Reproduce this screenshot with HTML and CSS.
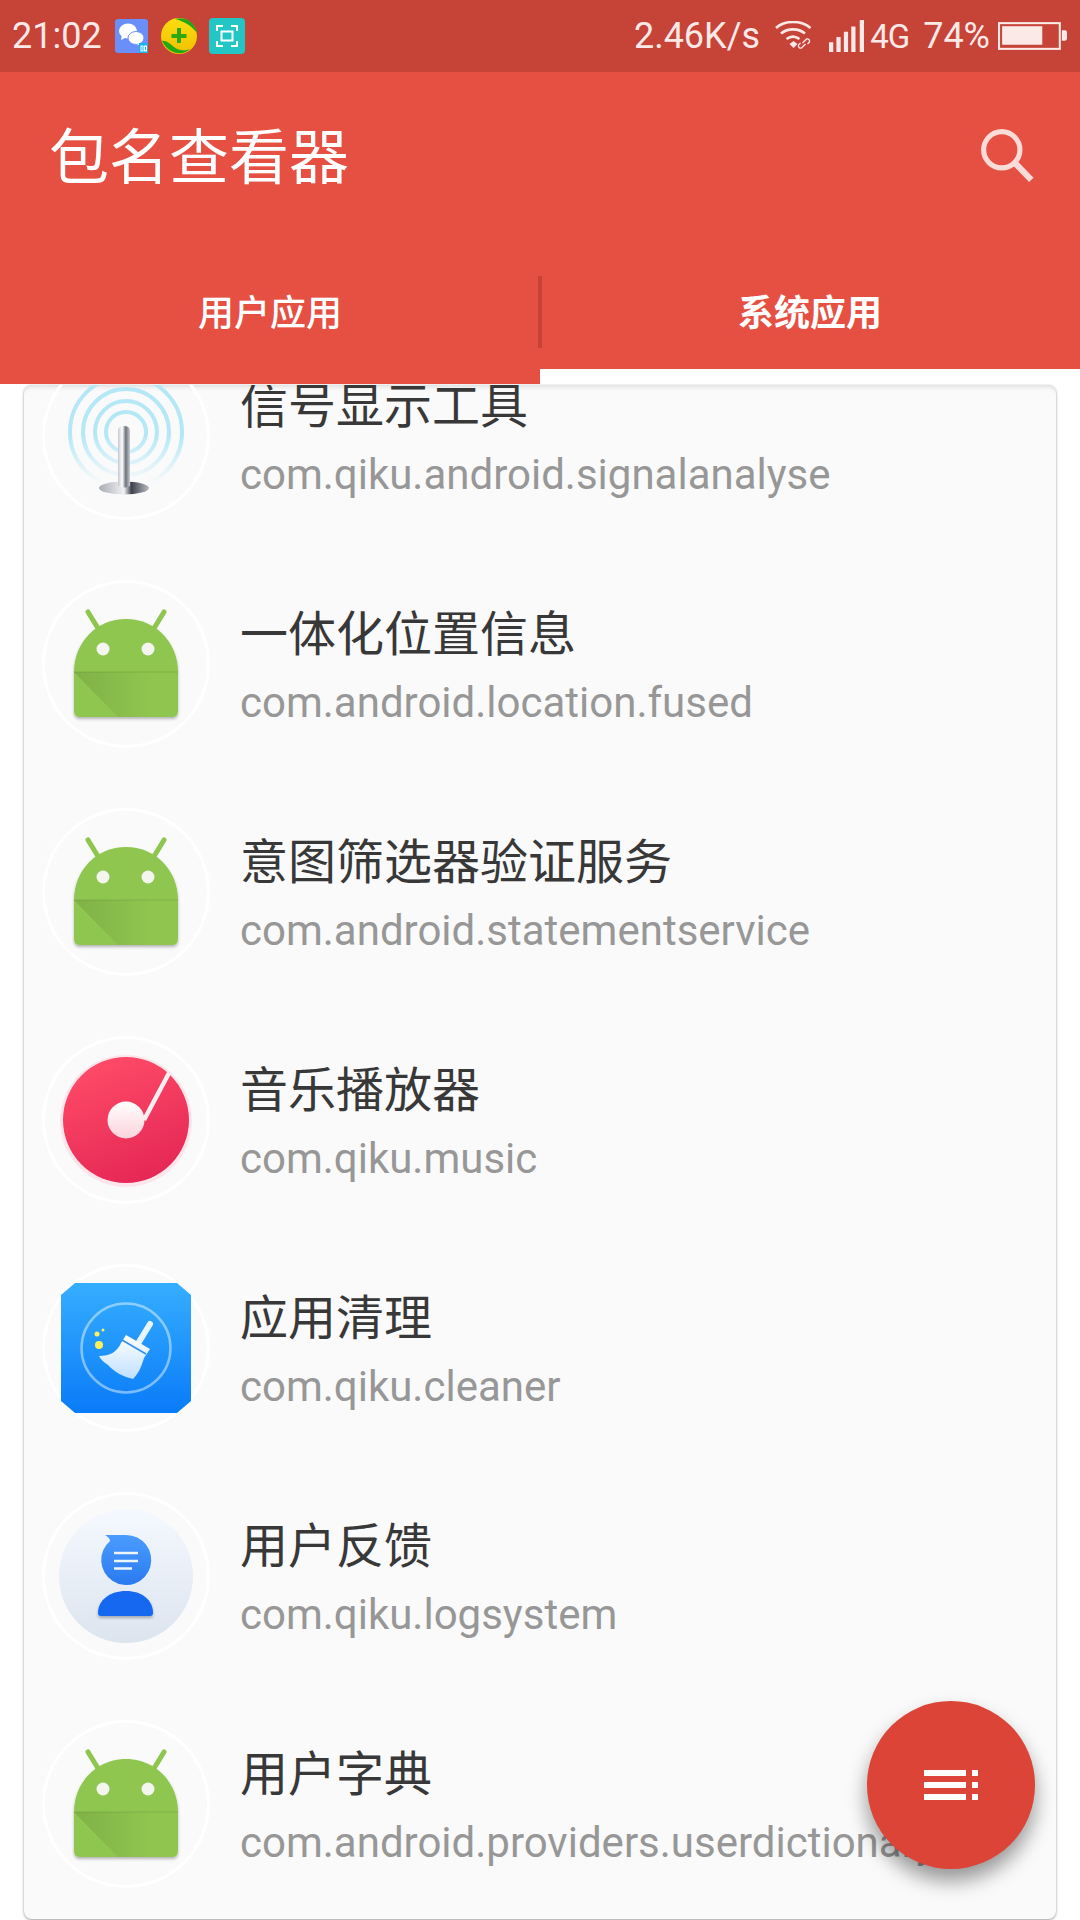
FILE: index.html
```html
<!DOCTYPE html>
<html lang="zh-CN">
<head>
  <meta charset="UTF-8" />
  <meta name="viewport" content="width=device-width, initial-scale=1.0" />
  <title>包名查看器</title>
  <link rel="stylesheet" href="styles.css">
</head>
<body>

<!-- shared icon parts -->
<svg class="defs" aria-hidden="true">
  <defs>
    <linearGradient id="foldShade" x1="0" y1="0" x2="1" y2="0">
      <stop offset="0" stop-color="#000" stop-opacity=".11"/>
      <stop offset=".75" stop-color="#000" stop-opacity="0"/>
    </linearGradient>
    <linearGradient id="musicFill" x1="0.3" y1="0" x2="0.7" y2="1">
      <stop offset="0" stop-color="#ff4b68"/>
      <stop offset="1" stop-color="#e42654"/>
    </linearGradient>
    <linearGradient id="musicDot" x1="0" y1="0" x2="0" y2="1">
      <stop offset="0" stop-color="#fff"/>
      <stop offset="1" stop-color="#fbd3dc"/>
    </linearGradient>
    <linearGradient id="cleanFill" x1="0" y1="0" x2="0" y2="1">
      <stop offset="0" stop-color="#36aeff"/>
      <stop offset="1" stop-color="#0a7bf8"/>
    </linearGradient>
    <linearGradient id="broomFill" x1="0" y1="0" x2="0" y2="1">
      <stop offset="0" stop-color="#fff"/>
      <stop offset="1" stop-color="#bfe0ff"/>
    </linearGradient>
    <linearGradient id="feedDisc" x1="0" y1="0" x2="0" y2="1">
      <stop offset="0" stop-color="#f5f9ff"/>
      <stop offset="1" stop-color="#dce4ee"/>
    </linearGradient>
    <linearGradient id="feedHead" x1="0" y1="0" x2="0" y2="1">
      <stop offset="0" stop-color="#4b9cff"/>
      <stop offset="1" stop-color="#2a7af0"/>
    </linearGradient>
    <linearGradient id="ringFade" x1="0" y1="0" x2="0" y2="1">
      <stop offset="0" stop-color="#fff"/>
      <stop offset=".5" stop-color="#fff"/>
      <stop offset=".78" stop-color="#000"/>
    </linearGradient>
    <linearGradient id="poleFill" x1="0" y1="0" x2="1" y2="0">
      <stop offset="0" stop-color="#c4c7cf"/>
      <stop offset=".35" stop-color="#fff"/>
      <stop offset=".65" stop-color="#6d727c"/>
      <stop offset="1" stop-color="#c9ccd3"/>
    </linearGradient>
    <linearGradient id="baseFill" x1="0" y1="0" x2="1" y2="0">
      <stop offset="0" stop-color="#a9acb5"/>
      <stop offset=".5" stop-color="#f0f1f3"/>
      <stop offset=".65" stop-color="#3f434b"/>
      <stop offset="1" stop-color="#b9bcc3"/>
    </linearGradient>
    <linearGradient id="qihooFill" x1="0" y1="0" x2="0" y2="1">
      <stop offset="0" stop-color="#fbdd10"/>
      <stop offset="1" stop-color="#f0c000"/>
    </linearGradient>
    <mask id="ringMask">
      <rect x="0" y="0" width="168" height="168" fill="url(#ringFade)"/>
    </mask>
    <filter id="softShadow" x="-10%" y="-10%" width="120%" height="125%">
      <feDropShadow dx="0" dy="2" stdDeviation="1.5" flood-color="#000" flood-opacity=".28"/>
    </filter>
    <filter id="ringBlur" x="-10%" y="-10%" width="120%" height="120%">
      <feGaussianBlur stdDeviation=".7"/>
    </filter>
    <symbol id="android" viewBox="0 0 168 168">
      <path d="M46 32 L57 50 M122 32 L111 50" stroke="#8fc650" stroke-width="5" stroke-linecap="round"/>
      <path filter="url(#softShadow)" d="M32 92 C32 62 55 39 84 39 C113 39 136 62 136 92 V131 Q136 137 130 137 H38 Q32 137 32 131 Z" fill="#8fc650"/>
      <path d="M32 92 H136 V131 Q136 137 130 137 H76 Z" fill="url(#foldShade)"/>
      <rect x="32" y="91" width="104" height="2" fill="#000" opacity=".05"/>
      <circle cx="61" cy="69" r="6.5" fill="#f3f5ee"/>
      <circle cx="106" cy="69" r="6.5" fill="#f3f5ee"/>
    </symbol>
  </defs>
</svg>

<!-- Status bar -->
<div class="status-bar">
  <div class="status-left">
    <span class="time">21:02</span>
    <svg class="note note-wechat" viewBox="0 0 33 34">
      <rect width="33" height="34" rx="3" fill="#6a8ff8"/>
      <ellipse cx="13" cy="12" rx="9" ry="7.5" fill="#fff"/>
      <path d="M7 16 L6 21 L12 18 Z" fill="#fff"/>
      <ellipse cx="21" cy="19" rx="8" ry="6.5" fill="#fff" stroke="#6a8ff8"/>
      <path d="M25 24 L27 27 L21 25 Z" fill="#fff"/>
      <rect x="24" y="24" width="9" height="10" fill="#12b5f5"/>
      <rect x="26" y="27" width="2" height="5" fill="none" stroke="#fff" stroke-width="1"/>
      <rect x="29.500" y="27" width="2" height="5" fill="none" stroke="#fff" stroke-width="1"/>
    </svg>
    <svg class="note note-qihoo" viewBox="0 0 36 36">
      <circle cx="18" cy="18" r="18" fill="url(#qihooFill)"/>
      <path d="M14 1 C24 -2 34 4 36 15 C30 7 22 3 14 1 Z" fill="#22a812"/>
      <path d="M1 23 C5 22 9 26 13 29 C18 33 24 33 29 31 C22 38 8 37 1 23 Z" fill="#22a812"/>
      <path d="M18 10 V25 M10.500 18 H25.500" stroke="#2fa80f" stroke-width="4"/>
    </svg>
    <svg class="note note-shot" viewBox="0 0 36 36">
      <rect width="36" height="36" rx="4" fill="#22c7c5"/>
      <path d="M8 13 V8 H14 M22 8 H28 V13 M28 23 V28 H22 M14 28 H8 V23" fill="none" stroke="#fff" stroke-width="2"/>
      <rect x="12.500" y="13.500" width="11" height="9" fill="none" stroke="#fff" stroke-width="2"/>
    </svg>
  </div>
  <div class="status-right">
    <span class="speed">2.46K/s</span>
    <svg class="ic-wifi" viewBox="0 0 38 30">
      <path d="M1.500 7 C10 -1 27 -1 36 7 M6.500 12.500 C13 7 24 7 30.500 12.500 M12 18 C16 15 21 15 25 18" fill="none" stroke="#fbe9e7" stroke-width="2.600"/>
      <path d="M15 23 L19 20 L23 23 L19 27 Z" fill="#fbe9e7"/>
      <path d="M28 22 L32 18 A2.400 2.400 0 0 1 35 21 L33 23 M31 23 L27 27 A2.400 2.400 0 0 1 24 24 L26 22" fill="none" stroke="#fbe9e7" stroke-width="1.400"/>
    </svg>
    <svg class="ic-signal" viewBox="0 0 33 30">
      <path d="M0 21 H4 V30 H0 Z M7 16 H11 V30 H7 Z M14 11 H18 V30 H14 Z M21 6 H25 V30 H21 Z M29 0 H33 V30 H29 Z" fill="#fbe9e7"/>
    </svg>
    <span class="net">4G</span>
    <span class="level">74%</span>
    <svg class="ic-battery" viewBox="0 0 67 27">
      <rect x="1" y="1" width="59" height="25" fill="none" stroke="#fbe9e7" stroke-width="2"/>
      <rect x="4" y="4" width="39" height="18" fill="#fbe9e7"/>
      <path d="M62 8 H65 Q67 8 67 10 V16 Q67 18 65 18 H62 Z" fill="#fbe9e7"/>
    </svg>
  </div>
</div>

<!-- Header -->
<div class="app-bar">
  <h1>包名查看器</h1>
  <svg class="ic-search" viewBox="0 0 56 56">
    <circle cx="22" cy="22" r="17.500" fill="none" stroke="#fadbd7" stroke-width="5"/>
    <path d="M34 34 L50.500 51" stroke="#fadbd7" stroke-width="6"/>
  </svg>
</div>

<div class="tabs">
  <div class="tab">用户应用</div>
  <div class="tab tab-active">系统应用</div>
</div>

<!-- App list -->
<div class="card">
  <div class="list">

    <div class="row">
      <div class="icon">
        <svg viewBox="0 0 168 168">
          <g mask="url(#ringMask)" fill="none" stroke="#b4e8f7" filter="url(#ringBlur)">
            <circle cx="84" cy="80" r="56" stroke-width="4"/>
            <circle cx="84" cy="80" r="43" stroke-width="4"/>
            <circle cx="84" cy="80" r="31" stroke-width="4"/>
            <circle cx="84" cy="80" r="20" stroke-width="4"/>
          </g>
          <ellipse cx="82" cy="136" rx="25" ry="6.500" fill="url(#baseFill)"/>
          <path d="M76 134 V79 Q76 74 82 74 Q88 74 88 79 V134 Q82 137 76 134 Z" fill="url(#poleFill)"/>
        </svg>
      </div>
      <div class="info">
        <div class="name">信号显示工具</div>
        <div class="pkg">com.qiku.android.signalanalyse</div>
      </div>
    </div>

    <div class="row">
      <div class="icon"><svg viewBox="0 0 168 168"><use href="#android"/></svg></div>
      <div class="info">
        <div class="name">一体化位置信息</div>
        <div class="pkg">com.android.location.fused</div>
      </div>
    </div>

    <div class="row">
      <div class="icon"><svg viewBox="0 0 168 168"><use href="#android"/></svg></div>
      <div class="info">
        <div class="name">意图筛选器验证服务</div>
        <div class="pkg">com.android.statementservice</div>
      </div>
    </div>

    <div class="row">
      <div class="icon">
        <svg viewBox="0 0 168 168">
          <circle cx="84" cy="85" r="66" fill="#fde6eb"/>
          <circle cx="84" cy="84" r="63" fill="url(#musicFill)"/>
          <path d="M102 84 L127 37" stroke="#fdeef1" stroke-width="4.500"/>
          <circle cx="84" cy="84" r="18.500" fill="url(#musicDot)"/>
        </svg>
      </div>
      <div class="info">
        <div class="name">音乐播放器</div>
        <div class="pkg">com.qiku.music</div>
      </div>
    </div>

    <div class="row">
      <div class="icon">
        <svg viewBox="0 0 168 168">
          <path d="M33 19 H135 L149 31 V137 L135 149 H33 L19 137 V31 Z" fill="url(#cleanFill)"/>
          <circle cx="84" cy="84" r="44.500" fill="none" stroke="#fff" stroke-opacity=".45" stroke-width="2.500"/>
          <path d="M108 60 L97 78" stroke="#e8f4ff" stroke-width="6" stroke-linecap="round"/>
          <path d="M84 71 L108 85 L102 94 C99 104 96 110 91 115 C82 113 72 108 66 101 C62 98 59 96 57 92 C68 92 75 88 79 79 Z" fill="url(#broomFill)"/>
          <path d="M80 76 L104 90" stroke="#2d8fee" stroke-width="1.500"/>
          <circle cx="57" cy="81" r="4" fill="#fdf15a"/>
          <circle cx="55" cy="70" r="2.500" fill="#fdf15a"/>
          <circle cx="61" cy="66" r="1.500" fill="#fdf15a"/>
        </svg>
      </div>
      <div class="info">
        <div class="name">应用清理</div>
        <div class="pkg">com.qiku.cleaner</div>
      </div>
    </div>

    <div class="row">
      <div class="icon">
        <svg viewBox="0 0 168 168">
          <circle cx="84" cy="84" r="67" fill="url(#feedDisc)"/>
          <path d="M63 43 H84 A25 25 0 1 1 68 49 Q68 46 63 43 Z" fill="url(#feedHead)"/>
          <path d="M72 61 H96 M72 69 H96 M72 76.500 H90" stroke="#fff" stroke-opacity=".9" stroke-width="2.600"/>
          <path filter="url(#softShadow)" d="M56 121 C56 108 68 99 84 99 C100 99 111 108 111 121 Q111 124 108 124 H59 Q56 124 56 121 Z" fill="#1368f0"/>
        </svg>
      </div>
      <div class="info">
        <div class="name">用户反馈</div>
        <div class="pkg">com.qiku.logsystem</div>
      </div>
    </div>

    <div class="row">
      <div class="icon"><svg viewBox="0 0 168 168"><use href="#android"/></svg></div>
      <div class="info">
        <div class="name">用户字典</div>
        <div class="pkg">com.android.providers.userdictionary</div>
      </div>
    </div>

  </div>
</div>

<!-- Floating button -->
<div class="fab">
  <svg viewBox="0 0 54 30">
    <path d="M0 0 H42 V6 H0 Z M0 12 H42 V18 H0 Z M0 24 H42 V30 H0 Z M48 0 H54 V6 H48 Z M48 12 H54 V18 H48 Z M48 24 H54 V30 H48 Z" fill="#fff"/>
  </svg>
</div>

</body>
</html>
```

FILE: styles.css
```css
* { margin: 0; padding: 0; box-sizing: border-box; }

html, body {
  width: 1080px;
  height: 1920px;
  overflow: hidden;
  background: #fff;
  font-family: Roboto, "Noto Sans CJK SC", sans-serif;
}

body {
  position: relative;
  display: flex;
  flex-direction: column;
}

.defs {
  position: absolute;
  width: 0;
  height: 0;
}

/* status bar */
.status-bar {
  flex: none;
  height: 72px;
  background: #c64338;
  color: #fbe9e7;
  display: flex;
  justify-content: space-between;
  align-items: center;
  padding: 0 13px 0 12px;
  font-size: 36px;
}

.status-left,
.status-right {
  display: flex;
  align-items: center;
}

.time { width: 103px; }

.note { display: block; }
.note-wechat { width: 33px; height: 34px; }
.note-qihoo { width: 36px; height: 36px; margin-left: 13px; }
.note-shot { width: 36px; height: 36px; margin-left: 12px; }

.speed { margin-right: 14px; }
.ic-wifi { width: 39px; height: 30px; margin-right: 16px; }
.ic-signal { width: 35px; height: 32px; margin-right: 6px; }
.net { font-size: 33px; margin-right: 14px; letter-spacing: -1px; }
.level { margin-right: 8px; }
.ic-battery { width: 69px; height: 28px; }

/* header */
.app-bar {
  flex: none;
  height: 168px;
  background: #e65042;
  display: flex;
  justify-content: space-between;
  align-items: center;
  padding: 0 43px 0 49px;
}

.app-bar h1 {
  margin-bottom: 8px;
  font-size: 60px;
  font-weight: 400;
  color: #fff;
  font-family: "Noto Sans CJK SC", sans-serif;
}

.ic-search { width: 58px; height: 58px; }

.tabs {
  flex: none;
  height: 144px;
  background: #e65042;
  display: flex;
}

.tab {
  position: relative;
  flex: 1;
  display: flex;
  align-items: center;
  justify-content: center;
  padding-bottom: 4px;
  color: #fff;
  font-size: 36px;
  font-weight: 500;
  font-family: "Noto Sans CJK SC", sans-serif;
}

.tab + .tab::before {
  content: "";
  position: absolute;
  left: -2px;
  top: 36px;
  width: 4px;
  height: 72px;
  background: #c64338;
}

.tab-active { font-weight: 700; }

.tab-active::after {
  content: "";
  position: absolute;
  left: 0;
  right: 0;
  bottom: 0;
  height: 15px;
  background: #fff;
}

/* list */
.card {
  flex: none;
  height: 1534px;
  margin: 1px 24px 0;
  background: #fafafa;
  border-radius: 8px;
  box-shadow: 0 1px 3px rgba(0, 0, 0, 0.4), inset 0 6px 6px -6px rgba(0, 0, 0, 0.2);
  overflow: hidden;
}

.list { margin-top: -63px; }

.row {
  height: 228px;
  display: flex;
  align-items: center;
  padding-left: 18px;
  white-space: nowrap;
}

.icon {
  flex: none;
  width: 168px;
  height: 168px;
  border-radius: 50%;
  border: 3px solid #fff;
}

.icon svg {
  display: block;
  width: 168px;
  height: 168px;
  margin: -3px;
}

.info {
  margin-left: 30px;
  padding-bottom: 3px;
}

.name {
  font-family: "Noto Sans CJK SC", sans-serif;
  font-size: 48px;
  line-height: 64px;
  color: #383838;
}

.pkg {
  margin-top: 16px;
  font-size: 42px;
  line-height: 50px;
  color: #979797;
}

/* floating button */
.fab {
  position: absolute;
  left: 867px;
  top: 1701px;
  width: 168px;
  height: 168px;
  border-radius: 50%;
  background: #db4437;
  box-shadow: 0 12px 20px rgba(0, 0, 0, 0.4);
  display: flex;
  align-items: center;
  justify-content: center;
}

.fab svg {
  width: 54px;
  height: 30px;
}
```
